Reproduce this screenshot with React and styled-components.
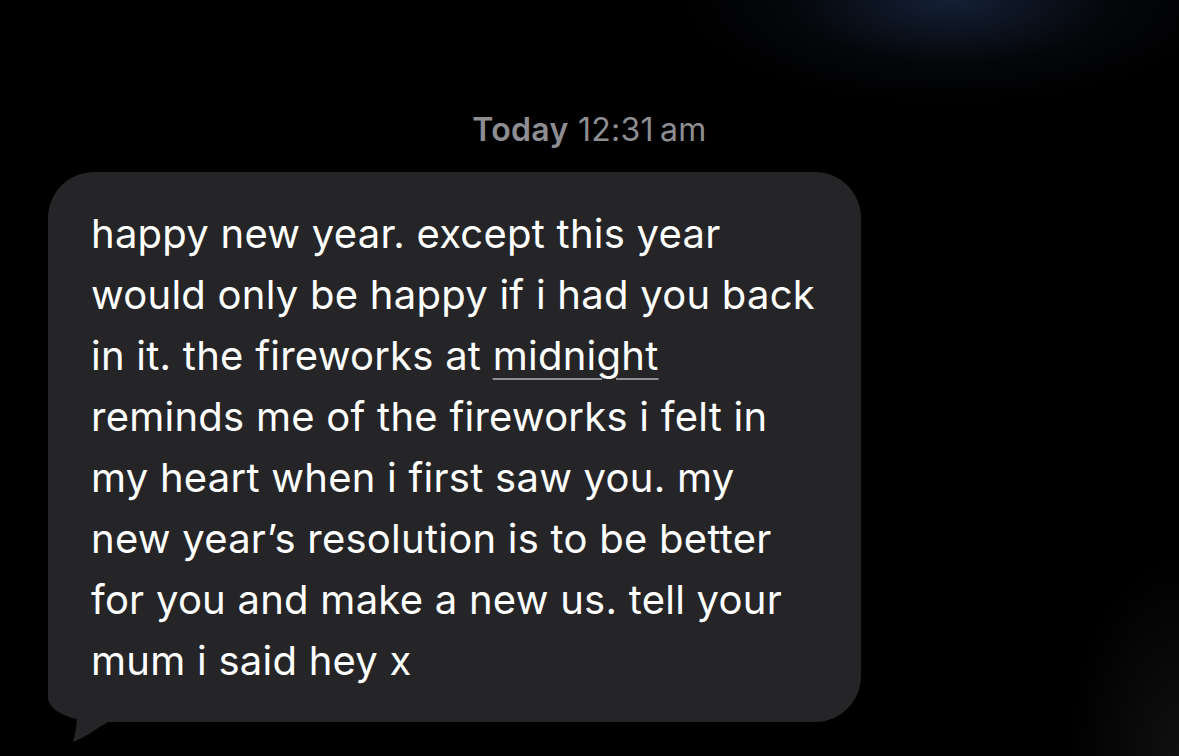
import React from "react";
import styled, { createGlobalStyle } from "styled-components";

const Global = createGlobalStyle`
  html, body { margin: 0; padding: 0; background: #000; }
  body { width: 1179px; height: 756px; overflow: hidden; }
`;

const Screen = styled.div`
  position: relative;
  width: 1179px;
  height: 756px;
  background:
    radial-gradient(ellipse 270px 105px at 950px 0px, rgba(24, 38, 64, 0.85), rgba(10, 14, 22, 0.45) 60%, rgba(0,0,0,0) 100%),
    radial-gradient(ellipse 110px 200px at 1179px 756px, rgba(18, 18, 20, 0.9), rgba(0,0,0,0) 100%),
    #000;
  font-family: Inter, "Noto Sans", "Liberation Sans", sans-serif;
  display: flex;
  flex-direction: column;
  padding: 110px 0 0 48px;
  box-sizing: border-box;
`;

const Stamp = styled.div`
  width: 1083px;
  text-align: center;
  color: #8d8d92;
  font-size: 32px;
  line-height: 40px;
  letter-spacing: 0.3px;
  margin-bottom: 22px;
  b { font-weight: 600; }
`;

const Bubble = styled.div`
  position: relative;
  width: 813px;
  height: 550px;
  box-sizing: border-box;
  background: #252528;
  border-radius: 46px;
  padding: 31px 0 0 43px;
  color: #fff;
  font-size: 40px;
  line-height: 61px;
  letter-spacing: 0.25px;
`;

const Line = styled.div`
  position: relative;
  white-space: nowrap;
`;

const Link = styled.span`
  text-decoration: underline;
  text-decoration-color: #8e8e93;
  text-decoration-thickness: 2px;
  text-underline-offset: 8px;
  text-decoration-skip-ink: auto;
`;

const Tail = styled.svg`
  position: absolute;
  left: 0;
  bottom: -20px;
  width: 70px;
  height: 70px;
`;

const lines = [
  "happy new year. except this year",
  "would only be happy if i had you back",
  null,
  "reminds me of the fireworks i felt in",
  "my heart when i first saw you. my",
  "new year\u2019s resolution is to be better",
  "for you and make a new us. tell your",
  "mum i said hey x",
];

export default function App() {
  return (
    <Screen>
      <Global />
      <Stamp>
        <b>Today</b> 12:31{"\u2009"}am
      </Stamp>
      <Bubble>
        <Tail viewBox="0 0 70 70">
          <path
            d="M0,0 L0,25 C0,36 14,44 29,47 C28,56 27,63 25,70 C36,66 48,57 60,50 L70,50 L70,0 Z"
            fill="#252528"
          />
        </Tail>
        {lines.map((l, i) =>
          l === null ? (
            <Line key={i}>
              in it. the fireworks at <Link>midnight</Link>
            </Line>
          ) : (
            <Line key={i}>{l}</Line>
          )
        )}
      </Bubble>
    </Screen>
  );
}
